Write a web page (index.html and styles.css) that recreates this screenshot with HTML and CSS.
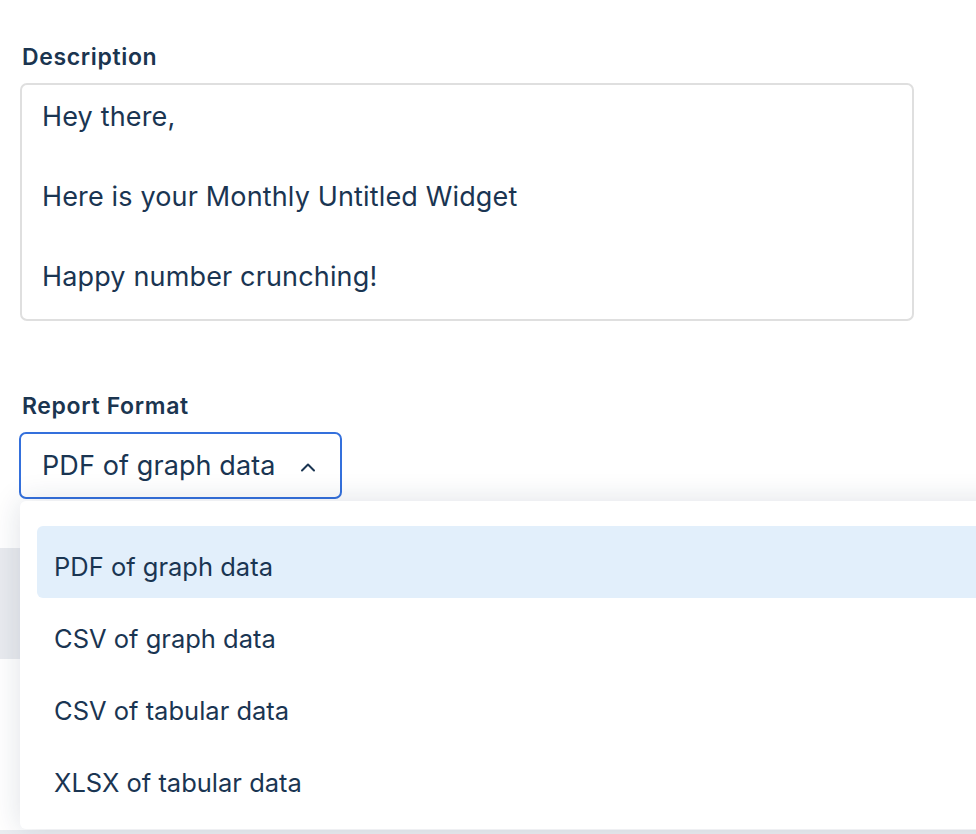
FILE: index.html
```html
<!DOCTYPE html>
<html lang="en">
<head>
<meta charset="utf-8">
<title>Report settings</title>
<link rel="stylesheet" href="styles.css">
</head>
<body>
<div class="page">
  <form class="form">
    <div class="field">
      <label class="field-label">Description</label>
      <div class="textarea">
        <p>Hey there,</p>
        <p>&nbsp;</p>
        <p>Here is your Monthly Untitled Widget</p>
        <p>&nbsp;</p>
        <p>Happy number crunching!</p>
      </div>
    </div>
    <div class="field field-format">
      <label class="field-label">Report Format</label>
      <div class="select-wrap">
        <div class="select">
          <span class="select-value">PDF of graph data</span>
          <svg class="chevron" width="16" height="10" viewBox="0 0 16 10"><path d="M2 8.5 L8 2.5 L14 8.5" fill="none" stroke="#1a3552" stroke-width="2" stroke-linecap="round" stroke-linejoin="round"/></svg>
        </div>
        <ul class="menu">
          <li class="menu-item is-active">PDF of graph data</li>
          <li class="menu-item">CSV of graph data</li>
          <li class="menu-item">CSV of tabular data</li>
          <li class="menu-item">XLSX of tabular data</li>
        </ul>
      </div>
    </div>
  </form>
  <div class="footer-bar"></div>
  <div class="footer-gap"></div>
  <div class="footer-bottom"></div>
</div>
</body>
</html>
```
FILE: styles.css
```css
html, body {
  margin: 0;
  padding: 0;
  background: #ffffff;
  overflow: hidden;
  height: 834px;
}
body {
  font-family: "Inter", "Noto Sans", "Liberation Sans", sans-serif;
  color: #1a3552;
}
.page {
  width: 976px;
}
.form {
  padding: 43px 0 0 20px;
  width: 894px;
}
.field {
  display: flex;
  flex-direction: column;
}
.field-label {
  font-size: 23px;
  font-weight: 600;
  letter-spacing: 0.65px;
  line-height: 28px;
  margin-bottom: 12px;
  padding-left: 2px;
  color: #1b3550;
}
.textarea {
  height: 238px;
  box-sizing: border-box;
  border: 2px solid #dfdfdf;
  border-radius: 7px;
  padding: 12px 20px;
  font-size: 27px;
  letter-spacing: 0.15px;
  line-height: 40px;
}
.textarea p {
  margin: 0;
}
.field-format {
  margin-top: 71px;
}
.select-wrap {
  position: relative;
}
.select {
  margin-left: -1px;
  width: 323px;
  height: 67px;
  box-sizing: border-box;
  border: 2px solid #3470dc;
  border-radius: 7px;
  display: flex;
  align-items: center;
  justify-content: space-between;
  padding: 0 24px 0 21px;
  font-size: 27px;
  letter-spacing: 0.1px;
}
.chevron {
  display: block;
  margin-top: 2px;
}
.menu {
  position: absolute;
  z-index: 2;
  top: 69px;
  left: 0;
  width: 1000px;
  height: 328px;
  box-sizing: border-box;
  margin: 0;
  padding: 25px 0 0 17px;
  list-style: none;
  background: #ffffff;
  border-radius: 6px;
  box-shadow: 0 0 30px rgba(20, 40, 80, 0.14);
}
.menu-item {
  height: 72px;
  box-sizing: border-box;
  display: flex;
  align-items: center;
  padding: 8px 0 0 17px;
  font-size: 25.5px;
  border-radius: 6px;
}
.menu-item.is-active {
  background: #e2effb;
}
.footer-bar {
  margin-top: 49px;
  height: 111px;
  background: #e9ebef;
}
.footer-gap {
  height: 171px;
}
.footer-bottom {
  height: 10px;
  background: #ebedf1;
}
```
